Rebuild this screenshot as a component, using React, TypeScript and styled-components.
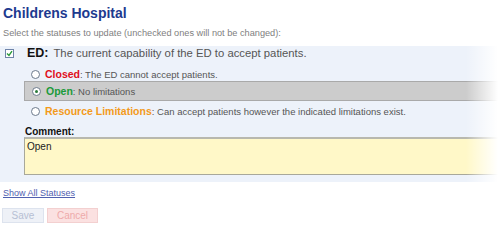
import React from "react";
import styled, { createGlobalStyle } from "styled-components";

const Global = createGlobalStyle`
  html, body { margin: 0; padding: 0; background: #fff; }
  body { font-family: "Liberation Sans", Arial, sans-serif; width: 498px; height: 226px; overflow: hidden; }
`;

const Page = styled.div`
  position: relative;
  width: 498px;
  height: 226px;
  overflow: hidden;
`;

const Title = styled.h1`
  margin: 0;
  padding: 5px 0 0 3px;
  font-size: 14px;
  line-height: 17px;
  font-weight: bold;
  color: #1d3a8f;
`;

const Sub = styled.div`
  padding: 6px 0 0 3px;
  font-size: 9.2px;
  line-height: 11px;
  color: #808080;
`;

const Panel = styled.div`
  margin-top: 7px;
  background: #edf2fa;
  padding: 1px 0 7px 0;
`;

const HeadRow = styled.div`
  display: flex;
  align-items: center;
  height: 12px;
  padding-left: 5px;
`;

const Check = styled.span`
  width: 7px;
  height: 7px;
  border: 1px solid #6f84a8;
  background: #fff;
  display: flex;
  align-items: center;
  justify-content: center;
  margin-right: 13px;
`;

const HeadText = styled.span`
  font-size: 11.3px;
  color: #555;
  white-space: nowrap;
  b {
    font-size: 12.5px;
    color: #111;
    margin-right: 2px;
  }
`;

const Options = styled.div`
  display: flex;
  flex-direction: column;
  margin-top: 8px;
  padding-left: 24px;
`;

const Option = styled.div<{ $selected?: boolean }>`
  display: flex;
  align-items: center;
  height: ${(p) => (p.$selected ? "18px" : "14px")};
  padding-left: 7px;
  margin-bottom: ${(p) => (p.$selected ? "3px" : "0")};
  background: ${(p) => (p.$selected ? "#cccccc" : "transparent")};
  border: ${(p) => (p.$selected ? "1px solid #a9a9a9" : "none")};
  border-right: none;
  white-space: nowrap;
`;

const Radio = styled.span<{ $on?: boolean }>`
  width: 7px;
  height: 7px;
  border-radius: 50%;
  border: 1px solid #6c7a8c;
  background: #fff;
  margin-right: 5px;
  display: flex;
  align-items: center;
  justify-content: center;
  &::after {
    content: "";
    width: 3px;
    height: 3px;
    border-radius: 50%;
    background: ${(p) => (p.$on ? "#2a7a3a" : "transparent")};
  }
`;

const Label = styled.b<{ $color: string }>`
  font-size: 10.5px;
  color: ${(p) => p.$color};
`;

const Desc = styled.span`
  font-size: 9.5px;
  color: #555;
`;

const CommentLabel = styled.div`
  margin: 9px 0 0 25px;
  font-size: 10px;
  font-weight: bold;
  line-height: 10px;
  color: #111;
`;

const TextArea = styled.div`
  margin-left: 24px;
  box-sizing: border-box;
  height: 38px;
  background: #fff8c8;
  border: 1px solid #a8a89a;
  border-top: 2px solid #b8b8ae;
  border-right: none;
  padding: 2px 2px;
  font-size: 10px;
  line-height: 12px;
  color: #222;
`;

const ShowAll = styled.a`
  display: inline-block;
  margin: 4px 0 0 3px;
  font-size: 9px;
  line-height: 11px;
  color: #5060b0;
  text-decoration: underline;
`;

const Buttons = styled.div`
  display: flex;
  gap: 3px;
  padding: 8px 0 0 2px;
`;

const Btn = styled.button<{ $kind: "save" | "cancel" }>`
  font-family: inherit;
  font-size: 10px;
  height: 15px;
  padding: 0;
  width: ${(p) => (p.$kind === "save" ? "42px" : "51px")};
  border: 1px solid ${(p) => (p.$kind === "save" ? "#dde3ee" : "#f3d0d0")};
  background: ${(p) => (p.$kind === "save" ? "#eef1f7" : "#fbe1e1")};
  color: ${(p) => (p.$kind === "save" ? "#b6bfd4" : "#eeaaaa")};
`;

const Fade = styled.div`
  position: absolute;
  top: 0;
  right: 0;
  width: 32px;
  height: 100%;
  background: linear-gradient(to right, rgba(255,255,255,0), #fff);
  pointer-events: none;
`;

export default function App() {
  return (
    <Page>
      <Global />
      <Title>Childrens Hospital</Title>
      <Sub>Select the statuses to update (unchecked ones will not be changed):</Sub>
      <Panel>
        <HeadRow>
          <Check>
            <svg width="7" height="7" viewBox="0 0 7 7">
              <path d="M1 3.5 L3 5.5 L6 1.2" stroke="#2a9a3a" strokeWidth="1.4" fill="none" />
            </svg>
          </Check>
          <HeadText>
            <b>ED:</b> The current capability of the ED to accept patients.
          </HeadText>
        </HeadRow>
        <Options>
          <Option>
            <Radio />
            <Label $color="#e0101a">Closed</Label>
            <Desc>: The ED cannot accept patients.</Desc>
          </Option>
          <Option $selected>
            <Radio $on />
            <Label $color="#1a9a3a">Open</Label>
            <Desc>: No limitations</Desc>
          </Option>
          <Option>
            <Radio />
            <Label $color="#f39a1a">Resource Limitations</Label>
            <Desc>: Can accept patients however the indicated limitations exist.</Desc>
          </Option>
        </Options>
        <CommentLabel>Comment:</CommentLabel>
        <TextArea>Open</TextArea>
      </Panel>
      <ShowAll>Show All Statuses</ShowAll>
      <Buttons>
        <Btn $kind="save">Save</Btn>
        <Btn $kind="cancel">Cancel</Btn>
      </Buttons>
      <Fade />
    </Page>
  );
}
